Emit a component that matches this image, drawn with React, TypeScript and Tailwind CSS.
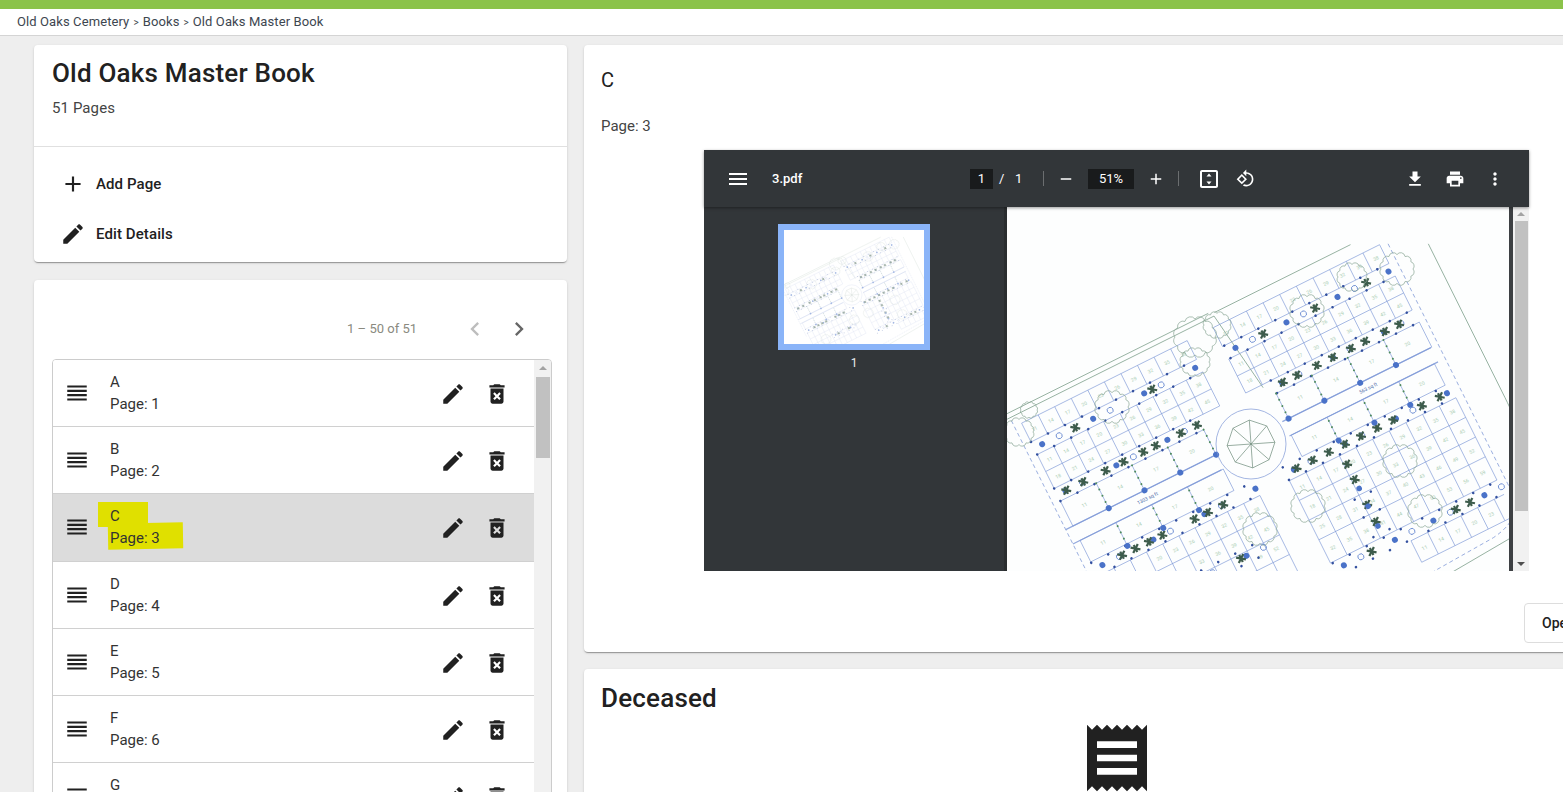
const PAGES = [
  { name: "A", page: 1 },
  { name: "B", page: 2 },
  { name: "C", page: 3 },
  { name: "D", page: 4 },
  { name: "E", page: 5 },
  { name: "F", page: 6 },
  { name: "G", page: 7 },
];

const icons = {
  plus: "M19 13h-6v6h-2v-6H5v-2h6V5h2v6h6v2z",
  edit: "M3 17.25V21h3.75L17.81 9.94l-3.75-3.75L3 17.25zM20.71 7.04c.39-.39.39-1.02 0-1.41l-2.34-2.34c-.39-.39-1.02-.39-1.41 0l-1.83 1.83 3.75 3.75 1.83-1.83z",
  reorder: "M3 15h18v-2H3v2zm0 4h18v-2H3v2zm0-8h18V9H3v2zm0-6v2h18V5H3z",
  trash: "M6 19c0 1.1.9 2 2 2h8c1.1 0 2-.9 2-2V7H6v12zm2.46-7.12l1.41-1.41L12 12.59l2.12-2.12 1.41 1.41L13.41 14l2.12 2.12-1.41 1.41L12 15.41l-2.12 2.12-1.41-1.41L10.59 14l-2.13-2.12zM15.5 4l-1-1h-5l-1 1H5v2h14V4z",
  left: "M15.41 7.41L14 6l-6 6 6 6 1.41-1.41L10.83 12z",
  right: "M10 6L8.59 7.41 13.17 12l-4.58 4.59L10 18l6-6z",
  receipt: "M18 17H6v-2h12v2zm0-4H6v-2h12v2zm0-4H6V7h12v2zM3 22l1.5-1.5L6 22l1.5-1.5L9 22l1.5-1.5L12 22l1.5-1.5L15 22l1.5-1.5L18 22l1.5-1.5L21 22V2l-1.5 1.5L18 2l-1.5 1.5L15 2l-1.5 1.5L12 2l-1.5 1.5L9 2 7.5 3.5 6 2 4.5 3.5 3 2v20z",
  menu: "M3 18h18v-2H3v2zm0-5h18v-2H3v2zm0-7v2h18V6H3z",
  minus: "M19 13H5v-2h14v2z",
  rotate: "M7.34 6.41L.86 12.9l6.49 6.48 6.49-6.48-6.5-6.49zM3.69 12.9l3.66-3.66L11 12.9l-3.66 3.66-3.65-3.66zm15.67-6.26C17.61 4.88 15.3 4 13 4V.76L8.76 5 13 9.24V6c1.79 0 3.58.68 4.95 2.05 2.73 2.73 2.73 7.17 0 9.9C16.58 19.32 14.79 20 13 20c-.97 0-1.94-.21-2.84-.61l-1.49 1.49C10.02 21.62 11.51 22 13 22c2.3 0 4.61-.88 6.36-2.64 3.52-3.51 3.52-9.21 0-12.72z",
  fit: "M19 3H5c-1.1 0-2 .9-2 2v14c0 1.1.9 2 2 2h14c1.1 0 2-.9 2-2V5c0-1.1-.9-2-2-2zm0 16H5V5h14v14zM12 6.5L9.5 9.5h5L12 6.5zm0 11l2.5-3h-5l2.5 3z",
  download: "M19 9h-4V3H9v6H5l7 7 7-7zM5 18v2h14v-2H5z",
  print: "M19 8H5c-1.66 0-3 1.34-3 3v6h4v4h12v-4h4v-6c0-1.66-1.34-3-3-3zm-3 11H8v-5h8v5zm3-7c-.55 0-1-.45-1-1s.45-1 1-1 1 .45 1 1-.45 1-1 1zm-1-9H6v4h12V3z",
  more: "M12 8c1.1 0 2-.9 2-2s-.9-2-2-2-2 .9-2 2 .9 2 2 2zm0 2c-1.1 0-2 .9-2 2s.9 2 2 2 2-.9 2-2-.9-2-2-2zm0 6c-1.1 0-2 .9-2 2s.9 2 2 2 2-.9 2-2-.9-2-2-2z",
};

function Icon({ d, className }: { d: string; className?: string }) {
  return (
    <svg viewBox="0 0 24 24" className={className} fill="currentColor">
      <path d={d} />
    </svg>
  );
}

const range = (from: number, to: number, step: number) => {
  const out: number[] = [];
  for (let v = from; v <= to + 0.01; v += step) out.push(v);
  return out;
};

const BLUE = "#7d97d6";
const DOT = "#4a72c8";
const GREEN = "#8aa896";

function Plant({ x, y }: { x: number; y: number }) {
  return (
    <g stroke="#3d5c4c" strokeWidth="2.2">
      <line x1={x - 4} y1={y - 3} x2={x + 4} y2={y + 3} />
      <line x1={x - 4} y1={y + 3} x2={x + 4} y2={y - 3} />
      <line x1={x} y1={y - 4} x2={x} y2={y + 4} />
    </g>
  );
}

// strip of path with dots and plants along it
function Strip({ x0, x1, y, plants = [] }: { x0: number; x1: number; y: number; plants?: number[] }) {
  return (
    <g>
      {range(x0, x1, 19).map((x, i) => (
        <g key={x}>
          <circle cx={x} cy={y - 7} r="1.3" fill="#33509f" />
          <circle cx={x} cy={y + 7} r="1.3" fill="#33509f" />
          {i % 3 === 0 && <circle cx={x + 9} cy={y} r="3" fill={DOT} />}
          {i % 3 === 1 && <circle cx={x + 9} cy={y} r="3" fill="none" stroke={DOT} strokeWidth="0.7" />}
        </g>
      ))}
      {plants.map((x) => (
        <Plant key={x} x={x} y={y} />
      ))}
    </g>
  );
}

function VStrip({ x, y0, y1, plants = [] }: { x: number; y0: number; y1: number; plants?: number[] }) {
  return (
    <g>
      {range(y0, y1, 7).map((y) => (
        <circle key={y} cx={x} cy={y} r="1" fill="#4d8a5c" />
      ))}
      <circle cx={x} cy={y1 + 4} r="3" fill={DOT} />
      {plants.map((y) => (
        <Plant key={y} x={x} y={y} />
      ))}
    </g>
  );
}

// only label cells that are fully inside the visible part of the page
const isVisible = (x: number, y: number) => {
  const px = 244 + x * 0.895 + y * 0.446;
  const py = 237 - x * 0.446 + y * 0.895;
  return px > 8 && px < 494 && py > 8 && py < 356;
};

function Grid({ x0, x1, ys, step, labels }: { x0: number; x1: number; ys: number[]; step: number; labels: boolean }) {
  const xs = range(x0, x1, step);
  return (
    <g stroke={BLUE} strokeWidth="0.6" fill="none">
      {ys.map((y) => (
        <line key={y} x1={x0} y1={y} x2={x1} y2={y} />
      ))}
      {xs.map((x) => (
        <line key={x} x1={x} y1={ys[0]} x2={x} y2={ys[ys.length - 1]} />
      ))}
      {labels &&
        xs.slice(0, -1).flatMap((x, i) =>
          ys.slice(0, -1).map((y, j) =>
            isVisible(x + step / 2, (y + ys[j + 1]) / 2) ? (
              <text
                key={`${x}-${y}`}
                x={x + step / 2 - 3}
                y={(y + ys[j + 1]) / 2 + 2}
                fontSize="5"
                fill="#a9cdb2"
                stroke="none"
                fontFamily="Roboto, sans-serif"
              >
                {(i * 3 + j * 7 + 11) % 90}
              </text>
            ) : null
          )
        )}
    </g>
  );
}

function Tree({ x, y, r }: { x: number; y: number; r: number }) {
  const n = 12;
  let d = "";
  for (let i = 0; i <= n; i++) {
    const a = (i / n) * Math.PI * 2;
    const px = (x + Math.cos(a) * r).toFixed(1);
    const py = (y + Math.sin(a) * r * 0.9).toFixed(1);
    d += i === 0 ? `M${px} ${py}` : `A${(r / 3.6).toFixed(1)} ${(r / 3.6).toFixed(1)} 0 0 1 ${px} ${py}`;
  }
  return <path d={d} fill="none" stroke="#88a594" strokeWidth="0.7" />;
}

function SitePlan({ labels }: { labels: boolean }) {
  const octagon = range(0, 7, 1).map((i) => {
    const a = (i / 8) * Math.PI * 2 + 0.39 - 0.46;
    return [Math.cos(a) * 24, Math.sin(a) * 24];
  });
  return (
    <g>
      <g transform="translate(244 237) rotate(-26.5)">
        {/* outer boundary */}
        <g fill="none" stroke={GREEN} strokeWidth="0.8">
          <path d="M-215 -136H20M-215 -131H24L36 -45" />
          <path d="M26 -134H178" />
          <path d="M248 -100V72C248 130 235 190 190 200L40 210" />
        </g>
        <path d="M212 -118V150C212 175 205 188 175 192L20 200" fill="none" stroke={BLUE} strokeWidth="0.7" strokeDasharray="4 3" />
        <path d="M-204 -128V60" fill="none" stroke={BLUE} strokeWidth="0.7" strokeDasharray="4 3" />

        {/* road */}
        <g fill="none" stroke="#93a9de" strokeWidth="1.3">
          <path d="M-204 -6H-38M-204 10H-38M38 -6H204M38 10H204" />
        </g>
        {labels && (
          <g fontSize="5" fill="#4b6aa8" fontFamily="Roboto, sans-serif">
            <text x="-128" y="4">1303 sq ft</text>
            <text x="120" y="4">563 sq ft</text>
          </g>
        )}

        {/* top left */}
        <Grid x0={-196} x1={-11} ys={[-121, -100]} step={18.5} labels={labels} />
        <Grid x0={-196} x1={-11} ys={[-86, -67, -48]} step={18.5} labels={labels} />
        <Grid x0={-196} x1={-36} ys={[-34, -6]} step={40} labels={labels} />
        <Strip x0={-196} x1={-14} y={-93} plants={[-150, -64]} />
        <Strip x0={-196} x1={-30} y={-41} plants={[-186, -167, -142, -122, -100, -86, -58, -40]} />
        <VStrip x={-156} y0={-34} y1={-10} />
        <VStrip x={-116} y0={-34} y1={-10} />
        <VStrip x={-76} y0={-34} y1={-10} />
        <VStrip x={-36} y0={-34} y1={-10} />

        {/* top right */}
        <Grid x0={18} x1={204} ys={[-121, -100]} step={18.6} labels={labels} />
        <Grid x0={18} x1={204} ys={[-86, -67, -48]} step={18.6} labels={labels} />
        <Grid x0={45} x1={205} ys={[-34, -6]} step={40} labels={labels} />
        <Strip x0={20} x1={200} y={-93} plants={[60, 118, 175]} />
        <Strip x0={46} x1={204} y={-41} plants={[56, 72, 94, 112, 132, 148, 170, 186]} />
        <VStrip x={45} y0={-34} y1={-10} />
        <VStrip x={85} y0={-34} y1={-10} />
        <VStrip x={125} y0={-34} y1={-10} />
        <VStrip x={165} y0={-34} y1={-10} />

        {/* bottom left */}
        <Grid x0={-196} x1={-36} ys={[10, 34]} step={40} labels={labels} />
        <Grid x0={-196} x1={-15} ys={[50, 72, 94, 116, 140]} step={18.1} labels={labels} />
        <Strip x0={-196} x1={-20} y={42} plants={[-165, -150, -135, -120, -84, -69, -52]} />
        <VStrip x={-156} y0={14} y1={32} />
        <VStrip x={-116} y0={14} y1={32} />
        <VStrip x={-76} y0={14} y1={32} />
        <Strip x0={-120} x1={-30} y={98} plants={[-100, -60]} />

        {/* bottom right */}
        <Grid x0={40} x1={200} ys={[10, 34]} step={40} labels={labels} />
        <Grid x0={18} x1={204} ys={[50, 72, 94, 116, 142]} step={18.6} labels={labels} />
        <Grid x0={100} x1={204} ys={[158, 182]} step={18.6} labels={labels} />
        <Strip x0={18} x1={204} y={42} plants={[30, 48, 66, 84, 102, 120, 138, 170, 190]} />
        <VStrip x={80} y0={14} y1={32} />
        <VStrip x={120} y0={14} y1={32} />
        <VStrip x={160} y0={14} y1={32} />
        <Strip x0={120} x1={200} y={150} plants={[154, 170]} />
        <Strip x0={20} x1={100} y={150} plants={[60]} />
        <g>
          {[61, 78, 106, 125].map((y) => (
            <Plant key={y} x={77} y={y} />
          ))}
          {[88, 108, 130].map((y) => (
            <g key={y}>
              <circle cx={77} cy={y} r="2.8" fill={DOT} />
              <circle cx={68} cy={y + 8} r="1.3" fill="#33509f" />
              <circle cx={86} cy={y + 8} r="1.3" fill="#33509f" />
            </g>
          ))}
        </g>
      </g>

      {/* centre circle */}
      <g transform="translate(244 237)" fill="none" stroke={BLUE} strokeWidth="0.7">
        <circle r="35" />
        <polygon points={octagon.map((p) => p.map((v) => v.toFixed(1)).join(",")).join(" ")} stroke="#6d8b7a" />
        {octagon.map((p, i) => (
          <line key={i} x1="0" y1="0" x2={p[0].toFixed(1)} y2={p[1].toFixed(1)} stroke="#6d8b7a" />
        ))}
      </g>

      {/* tree outlines, in page position */}
      <Tree x={105} y={200} r={16} />
      <Tree x={300} y={104} r={16} />
      <Tree x={301} y={299} r={16} />
      <Tree x={393} y={254} r={16} />
      <Tree x={418} y={304} r={16} />
      <Tree x={253} y={322} r={16} />
      <Tree x={155} y={390} r={16} />
      <Tree x={188} y={130} r={20} />
      <Tree x={210} y={118} r={13} />
      <Tree x={188} y={155} r={14} />
      <Tree x={390} y={62} r={16} />
      <Tree x={345} y={70} r={14} />
      <Tree x={12} y={225} r={14} />
      <Tree x={22} y={203} r={8} />
    </g>
  );
}

function PdfViewer() {
  return (
    <div className="ml-[103px] w-[825px] h-[421px] bg-[#323639] flex flex-col text-white">
      <div className="h-[57px] flex items-center shrink-0 shadow-[0_1px_3px_rgba(0,0,0,.4)] relative z-10">
        <Icon d={icons.menu} className="w-6 h-6 ml-[22px] shrink-0" />
        <span className="ml-[22px] text-[13px] font-medium w-[198px]">3.pdf</span>
        <span className="w-[23px] h-5 bg-[#191b1c] text-[13px] flex items-center justify-center">1</span>
        <span className="ml-[6px] text-[13px] w-[16px]">/</span>
        <span className="text-[13px] w-[28px]">1</span>
        <span className="w-px h-[15px] bg-[#6b6e70]" />
        <Icon d={icons.minus} className="w-[18px] h-[18px] ml-[13px]" />
        <span className="ml-[13px] w-[46px] h-5 bg-[#191b1c] text-[13px] flex items-center justify-center">51%</span>
        <Icon d={icons.plus} className="w-[18px] h-[18px] ml-[13px]" />
        <span className="ml-[13px] w-px h-[15px] bg-[#6b6e70]" />
        <Icon d={icons.fit} className="w-6 h-6 ml-[18px]" />
        <Icon d={icons.rotate} className="w-[19px] h-[19px] ml-[15px]" />
        <Icon d={icons.download} className="w-5 h-5 ml-[150px]" />
        <Icon d={icons.print} className="w-5 h-5 ml-5" />
        <Icon d={icons.more} className="w-5 h-5 ml-5" />
      </div>
      <div className="flex-1 flex min-h-0">
        <div className="w-[300px] shrink-0 flex flex-col items-center pt-[17px]">
          <div className="ml-[-1px] w-[152px] h-[126px] border-[6px] border-[#8ab4f8] bg-white">
            <svg viewBox="10 13 483 393" className="w-full h-full opacity-50">
              <SitePlan labels={false} />
            </svg>
          </div>
          <span className="mt-[4px] text-[12px] text-[#e8eaed]">1</span>
        </div>
        <div className="w-[3px] bg-[#2a2d2f]" />
        <div className="flex-1 bg-white min-w-0">
          <svg viewBox="0 0 502 364" className="w-full h-full bg-[#fdfefe]">
            <SitePlan labels />
          </svg>
        </div>
        <div className="w-[4px] bg-[#3d4043]" />
        <div className="w-[16px] bg-[#f1f1f1] flex flex-col items-center relative">
          <span className="mt-[5px] w-0 h-0 border-x-[4px] border-x-transparent border-b-[4px] border-b-[#a3a3a3]" />
          <div className="mt-[5px] w-[13px] h-[290px] bg-[#c1c1c1]" />
          <span className="mt-auto mb-[5px] w-0 h-0 border-x-[4px] border-x-transparent border-t-[4px] border-t-[#505050]" />
        </div>
      </div>
    </div>
  );
}

function PageRow({ name, page, selected }: { name: string; page: number; selected: boolean }) {
  return (
    <div className={`h-[67.2px] shrink-0 flex items-center border-b border-[#d0d0d0] relative ${selected ? "bg-[#dcdcdc]" : "bg-white"}`}>
      {selected && (
        <>
          <div className="absolute left-[45px] top-[8px] w-[50px] h-[25px] bg-[#e0e000]" />
          <div className="absolute left-[55px] top-[29px] w-[75px] h-[26px] -rotate-1 bg-[#e0e000]" />
        </>
      )}
      <Icon d={icons.reorder} className="w-[26px] h-[26px] ml-[11px] shrink-0 text-[#212121]" />
      <div className="ml-[20px] text-[15px] leading-[22px] text-[#333] relative flex-1">
        <div>{name}</div>
        <div>Page: {page}</div>
      </div>
      <Icon d={icons.edit} className="w-[26px] h-[26px] mt-[2px] text-[#212121] shrink-0" />
      <Icon d={icons.trash} className="w-[26px] h-[26px] mt-[2px] ml-[18px] mr-[24px] text-[#212121] shrink-0" />
    </div>
  );
}

export default function App() {
  return (
    <div className="h-[792px] w-[1563px] overflow-hidden bg-[#eeeeee] font-['Roboto',sans-serif] text-[#212121]">
      <div className="h-[9px] bg-[#8bc34a]" />
      <nav className="h-[27px] bg-white border-b border-[#d4d4d4] flex items-center pl-[17px] text-[13px] tracking-[0.1px] text-[#3d4650]">
        <span>Old Oaks Cemetery</span>
        <span className="mx-[4px] text-[10px]">&gt;</span>
        <span>Books</span>
        <span className="mx-[4px] text-[10px]">&gt;</span>
        <span>Old Oaks Master Book</span>
      </nav>

      <div className="flex gap-[17px] pl-[34px] pt-[9px] items-start">
        <div className="w-[533px] shrink-0 flex flex-col gap-[18px]">
          <section className="bg-white rounded shadow-[0_2px_1px_-1px_rgba(0,0,0,.2),0_1px_1px_0_rgba(0,0,0,.14),0_1px_3px_0_rgba(0,0,0,.12)] h-[217px]">
            <div className="h-[102px] pl-[18px] pt-[12px] border-b border-[#e0e0e0]">
              <h1 className="text-[26px] leading-[32px] font-medium tracking-[0.2px]">Old Oaks Master Book</h1>
              <p className="mt-[9px] text-[15px] leading-[20px] tracking-[0.1px] text-[#444]">51 Pages</p>
            </div>
            <div className="flex items-center h-[50px] mt-[12px] pl-[26px] text-[15px] tracking-[0.1px] font-medium">
              <Icon d={icons.plus} className="w-[26px] h-[26px]" />
              <span className="ml-[10px]">Add Page</span>
            </div>
            <div className="flex items-center h-[50px] pl-[26px] text-[15px] tracking-[0.1px] font-medium">
              <Icon d={icons.edit} className="w-[26px] h-[26px]" />
              <span className="ml-[10px]">Edit Details</span>
            </div>
          </section>

          <section className="bg-white rounded shadow-[0_2px_1px_-1px_rgba(0,0,0,.2),0_1px_1px_0_rgba(0,0,0,.14),0_1px_3px_0_rgba(0,0,0,.12)] h-[600px] px-[18px] pt-[37px]">
            <div className="flex items-center justify-end h-6 pr-[16px]">
              <span className="text-[13px] text-[#8a8a80] mr-[44px]">1 – 50 of 51</span>
              <Icon d={icons.left} className="w-7 h-7 text-[#bdbdbd] mr-4" />
              <Icon d={icons.right} className="w-7 h-7 text-[#666]" />
            </div>
            <div className="mt-[18px] w-[500px] h-[440px] border border-[#cccccc] rounded flex overflow-hidden">
              <div className="flex-1 flex flex-col min-w-0">
                {PAGES.map((p) => (
                  <PageRow key={p.name} name={p.name} page={p.page} selected={p.name === "C"} />
                ))}
              </div>
              <div className="w-[17px] bg-[#f1f1f1] flex flex-col items-center shrink-0">
                <span className="mt-[6px] w-0 h-0 border-x-[4px] border-x-transparent border-b-[4px] border-b-[#a3a3a3]" />
                <div className="mt-[7px] w-[14px] h-[81px] bg-[#c1c1c1]" />
              </div>
            </div>
          </section>
        </div>

        <div className="w-[1100px] shrink-0 flex flex-col gap-[17px]">
          <section className="bg-white rounded shadow-[0_2px_1px_-1px_rgba(0,0,0,.2),0_1px_1px_0_rgba(0,0,0,.14),0_1px_3px_0_rgba(0,0,0,.12)] h-[607px] pl-[17px] pt-[21px]">
            <h2 className="text-[20px] leading-[28px]">C</h2>
            <p className="mt-[22px] text-[15px] leading-[20px] text-[#444]">Page: 3</p>
            <div className="mt-[14px]">
              <PdfViewer />
            </div>
            <div className="mt-[32px] ml-[923px] w-[110px] h-[40px] border border-[#dddddd] rounded flex items-center pl-[17px] text-[14px] font-medium">
              Open
            </div>
          </section>

          <section className="bg-white rounded shadow-[0_2px_1px_-1px_rgba(0,0,0,.2),0_1px_1px_0_rgba(0,0,0,.14),0_1px_3px_0_rgba(0,0,0,.12)] h-[300px] pl-[17px] pt-[13px]">
            <h2 className="text-[26px] leading-[32px] font-medium tracking-[0.2px]">Deceased</h2>
            <Icon d={icons.receipt} className="w-20 h-20 ml-[476px] mt-[4px] text-[#212121]" />
          </section>
        </div>
      </div>
    </div>
  );
}
